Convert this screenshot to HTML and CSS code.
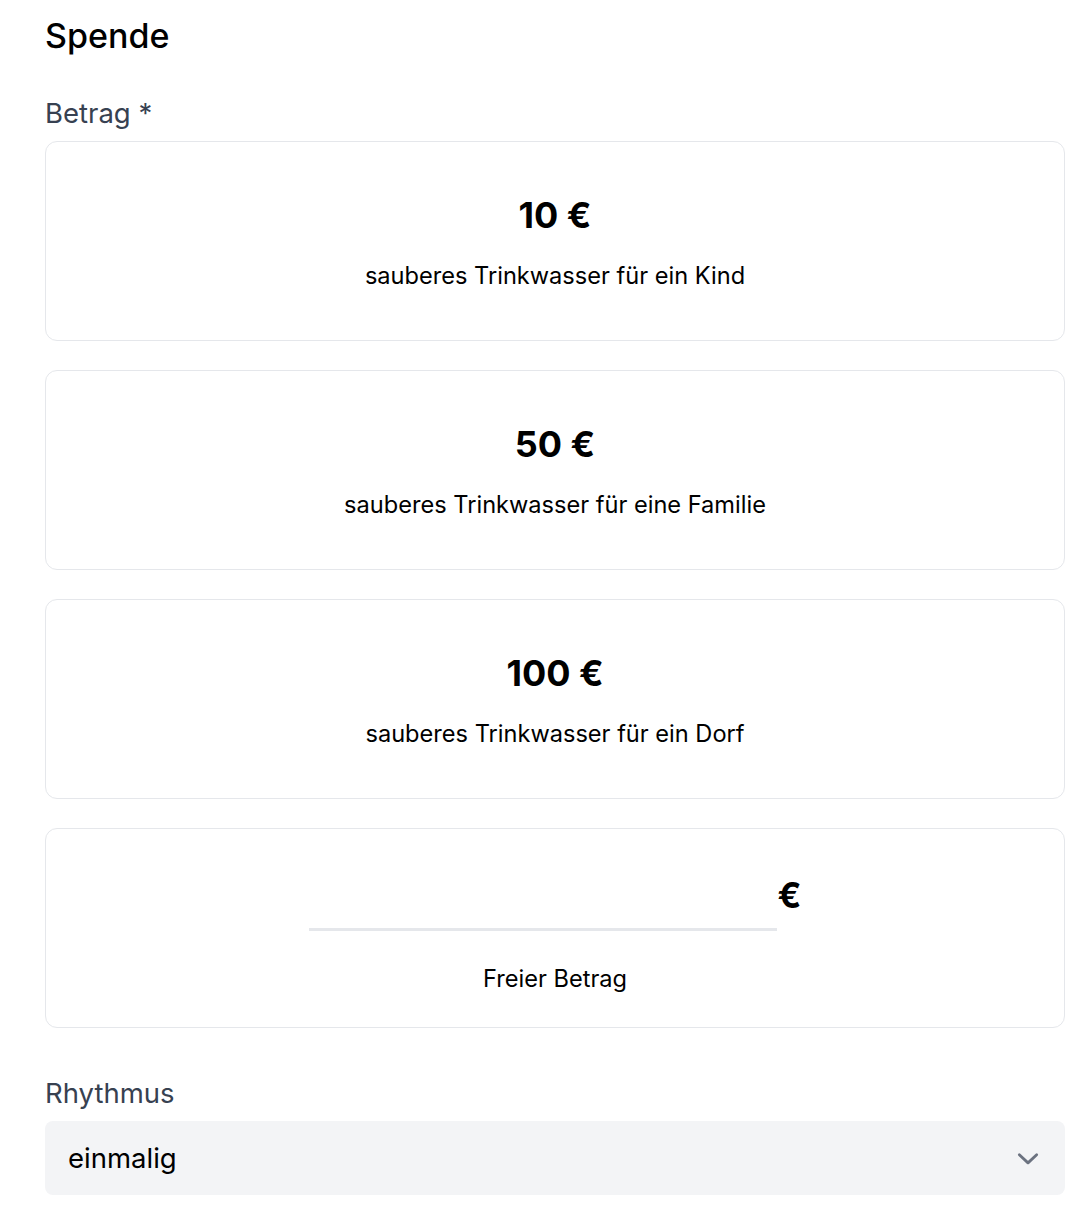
FILE: index.html
```html
<!DOCTYPE html>
<html lang="de">
<head>
  <meta charset="UTF-8" />
  <meta name="viewport" content="width=device-width, initial-scale=1.0" />
  <title>Spende</title>
  <link rel="stylesheet" href="styles.css">
</head>
<body>
  <form class="donation-form">
    <h1 class="form-title">Spende</h1>

    <div class="field">
      <label class="field-label">Betrag *</label>
      <div class="amount-list">
        <div class="amount-card">
          <div class="amount">10 €</div>
          <div class="amount-text">sauberes Trinkwasser für ein Kind</div>
        </div>
        <div class="amount-card">
          <div class="amount">50 €</div>
          <div class="amount-text">sauberes Trinkwasser für eine Familie</div>
        </div>
        <div class="amount-card">
          <div class="amount">100 €</div>
          <div class="amount-text">sauberes Trinkwasser für ein Dorf</div>
        </div>
        <div class="amount-card amount-card-custom">
          <div class="custom-row">
            <input type="text" class="custom-input" />
            <span class="currency">€</span>
          </div>
          <div class="amount-text custom-text">Freier Betrag</div>
        </div>
      </div>
    </div>

    <div class="field field-rhythm">
      <label class="field-label">Rhythmus</label>
      <div class="select">
        <span>einmalig</span>
        <svg class="chevron" viewBox="0 0 24 24" fill="none" stroke="#6b7280" stroke-width="2.6" stroke-linecap="round" stroke-linejoin="round">
          <path d="M4 9l8 7.5 8-7.5" />
        </svg>
      </div>
    </div>
  </form>
</body>
</html>
```

FILE: styles.css
```css
* {
  box-sizing: border-box;
  margin: 0;
  padding: 0;
}

body {
  background-color: #fff;
  color: #000;
  font-family: 'Inter', 'Noto Sans', sans-serif;
}

.donation-form {
  width: 1020px;
  margin-left: 45px;
  padding-top: 16px;
}

.form-title {
  font-size: 34px;
  line-height: 40px;
  font-weight: 500;
  margin-bottom: 41px;
}

.field-label {
  display: block;
  font-size: 27.5px;
  line-height: 32px;
  color: #374151;
  margin-bottom: 12px;
}

.amount-list {
  display: flex;
  flex-direction: column;
  gap: 29px;
}

.amount-card {
  height: 200px;
  padding-top: 5px;
  border: 1px solid #e5e7eb;
  border-radius: 12px;
  display: flex;
  flex-direction: column;
  align-items: center;
  justify-content: center;
  gap: 25px;
}

.amount-card-custom {
  padding-top: 0;
  padding-bottom: 3px;
}

.amount {
  font-size: 36px;
  line-height: 40px;
  font-weight: 700;
}

.amount-text {
  font-size: 23.6px;
  line-height: 32px;
}

.custom-row {
  display: flex;
  align-items: center;
}

.custom-input {
  width: 468px;
  height: 73px;
  border: none;
  border-bottom: 3px solid #e5e7eb;
  font-size: 34px;
  font-family: inherit;
  outline: none;
  background: transparent;
}

.currency {
  font-size: 35px;
  font-weight: 700;
  margin-left: 1px;
}

.custom-text {
  margin-top: 7px;
}

.field-rhythm {
  margin-top: 49px;
}

.select {
  height: 74px;
  background-color: #f3f4f6;
  border-radius: 8px;
  display: flex;
  align-items: center;
  justify-content: space-between;
  padding: 0 24px 0 23px;
  font-size: 27.5px;
}

.chevron {
  width: 26px;
  height: 26px;
}
```
